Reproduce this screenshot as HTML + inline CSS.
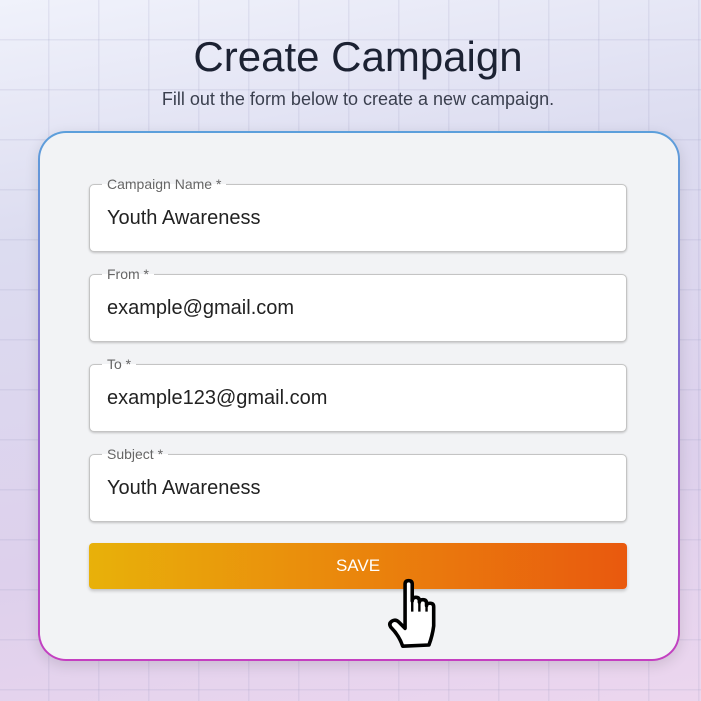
<!DOCTYPE html>
<html><head><style>
*{margin:0;padding:0;box-sizing:border-box}
body{width:701px;height:701px;overflow:hidden;font-family:"Liberation Sans",sans-serif;position:relative;
background:linear-gradient(170deg,#f0f2fb 0%,#dcdcf0 30%,#ddd0ec 70%,#ecd6ee 100%);}
.grid{position:absolute;inset:0;
background-image:linear-gradient(to right,rgba(150,150,190,.16) 1.5px,transparent 1.5px),linear-gradient(to bottom,rgba(150,150,190,.16) 1.5px,transparent 1.5px);
background-size:50px 50px;background-position:48px 39px;}
h1{position:absolute;top:33px;left:0;width:716px;text-align:center;font-weight:400;font-size:42px;color:#1c2233}
p.sub{position:absolute;top:89px;left:0;width:716px;text-align:center;font-size:18px;color:#3a3f4e}
.card{position:absolute;left:38px;top:131px;width:642px;height:530px;border-radius:28px;padding:2px;
background:linear-gradient(to bottom,#5c9fdb,#8f6ad0 50%,#c43fc0);box-shadow:0 4px 14px rgba(0,0,0,.12)}
.inner{width:100%;height:100%;border-radius:26px;background:#f2f3f5;position:relative}
.f{position:absolute;left:49px;width:538px;height:68px;background:#fff;border:1px solid #c4c4c4;border-radius:5px;box-shadow:0 1px 2px rgba(0,0,0,.2)}
.f span.l{position:absolute;top:-10px;left:12px;background:linear-gradient(#f2f3f5 50%,#fff 50%);padding:0 5px;font-size:14px;color:#666;line-height:18px}
.f span.v{position:absolute;left:17px;top:22px;font-size:20px;color:#222}
.btn{position:absolute;left:49px;top:410px;width:538px;height:46px;border-radius:4px;
background:linear-gradient(to right,#e8b10a,#ea8e0c 40%,#e9590e);color:#fff;font-size:17px;text-align:center;line-height:46px;box-shadow:0 2px 3px rgba(0,0,0,.2)}
</style></head><body>
<div class="grid"></div>
<h1>Create Campaign</h1>
<p class="sub">Fill out the form below to create a new campaign.</p>
<div class="card"><div class="inner">
<div class="f" style="top:51px"><span class="l">Campaign Name *</span><span class="v">Youth Awareness</span></div>
<div class="f" style="top:141px"><span class="l">From *</span><span class="v">example@gmail.com</span></div>
<div class="f" style="top:231px"><span class="l">To *</span><span class="v">example123@gmail.com</span></div>
<div class="f" style="top:321px"><span class="l">Subject *</span><span class="v">Youth Awareness</span></div>
<div class="btn">SAVE</div>
</div></div>
<svg style="position:absolute;left:386px;top:578px" width="62" height="72" viewBox="0 0 52 60">
<path d="M16 5 Q16 2 19 2 Q22 2 22 5 L22 19 Q22 16 25 16 Q28 16 28 19 L28 20 Q28 18 31 18 Q34 18 34 21 L34 23 Q34 21 37 21 Q40 21 40 24 L40 40 Q39 48 36 56 L14 57 Q11 48 4 41 Q2 38 5 36 Q8 34 11 37 L16 42 Z" fill="#fff" stroke="#000" stroke-width="3" stroke-linejoin="round"/>
<path d="M22 19 V28 M28 20 V28 M34 23 V28" stroke="#000" stroke-width="2"/>
</svg>
</body></html>
